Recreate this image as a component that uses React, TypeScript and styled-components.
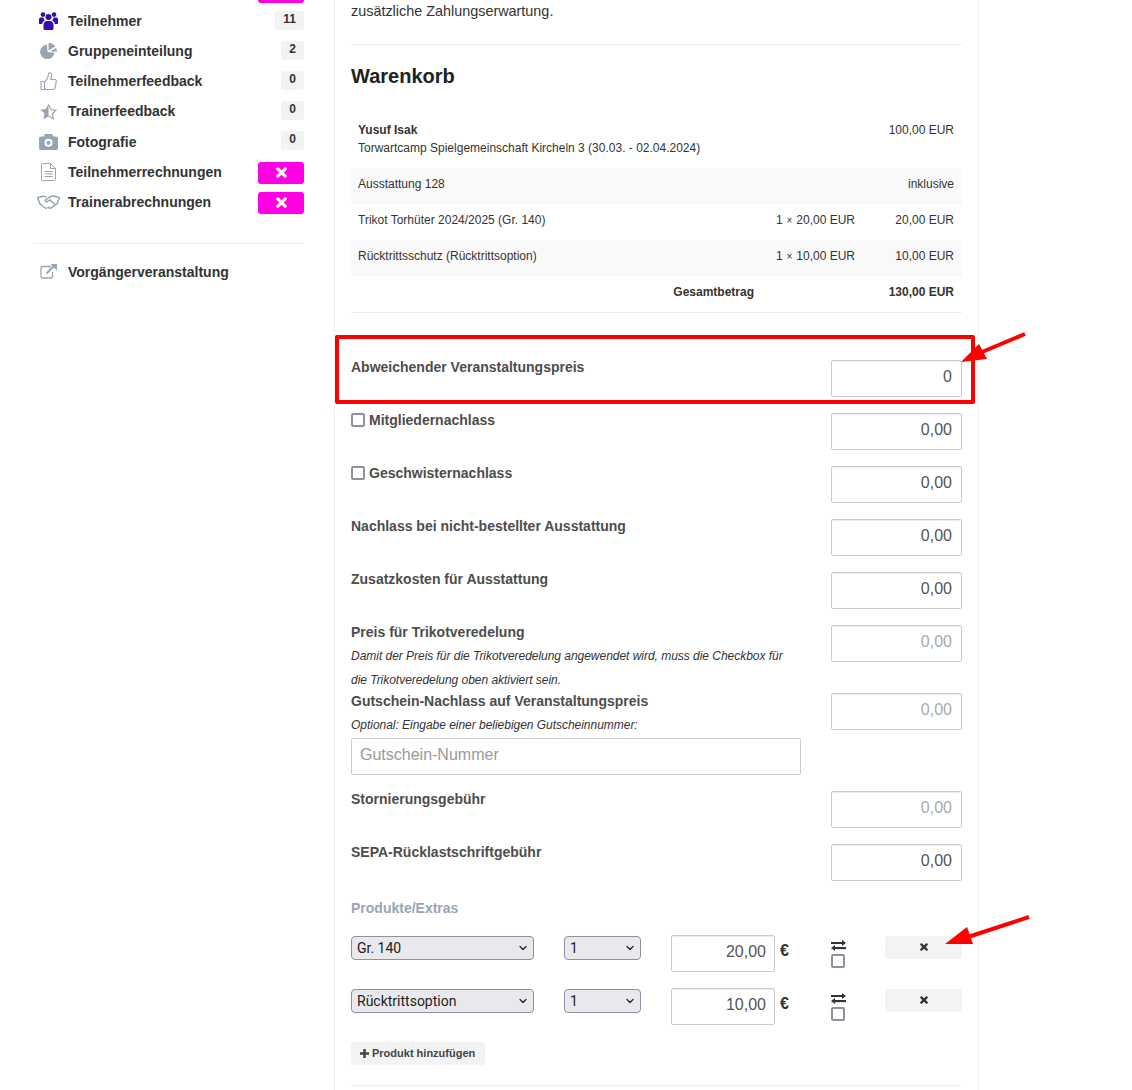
import React from 'react';
import styled, { createGlobalStyle } from 'styled-components';
import { ChevronDown } from 'lucide-react';

const GlobalStyle = createGlobalStyle`
  html, body {
    margin: 0;
    padding: 0;
    height: 1090px;
    overflow: hidden;
    background: #fff;
    font-family: 'Liberation Sans', sans-serif;
    color: #333;
  }
  * { box-sizing: border-box; }
`;

const UsersIcon = () => (
  <svg width="19" height="18" viewBox="0 0 19 18" fill="currentColor">
    <circle cx="4" cy="2.6" r="2.3" />
    <circle cx="15" cy="2.6" r="2.3" />
    <circle cx="9.5" cy="5" r="3" />
    <path d="M0 7.5c0-1.4 1-2 2-2h2.500c.2 1.400.7 2.300 1.500 3-1.500.6-2.600 1.800-2.800 3.500H1c-.6 0-1-.4-1-1z" />
    <path d="M19 7.500c0-1.400-1-2-2-2h-2.500c-.2 1.400-.7 2.300-1.500 3 1.500.6 2.600 1.800 2.800 3.500H18c.6 0 1-.4 1-1z" />
    <path d="M4.500 13c0-2.300 1.400-4 3.300-4h3.400c1.900 0 3.300 1.700 3.300 4v3.500c0 .9-.6 1.500-1.500 1.500H6c-.9 0-1.500-.6-1.500-1.500z" />
  </svg>
);

const PieIcon = () => (
  <svg width="17" height="16" viewBox="0 0 17 16" fill="currentColor">
    <path d="M7 1.500A7.300 7.300 0 1 0 14.600 9.800L7.500 9z" />
    <path d="M8.500 0A7.500 7.500 0 0 1 15.300 3.500L8.500 7.500z" />
    <path d="M16 5a7.600 7.600 0 0 1 1 3.700L10 8.200z" />
  </svg>
);

const ThumbIcon = () => (
  <svg width="17" height="19" viewBox="0 0 17 19" fill="none" stroke="currentColor" strokeWidth="1.100">
    <path d="M1 9.500h3.500v8H2c-.6 0-1-.4-1-1z" />
    <path d="M4.500 9.500c2-1 3.500-3.500 3.800-6.500 0-1.500.6-2.300 1.400-2.300 1.400 0 2 1.500 1.800 3l-.7 3.800h4.200c1 0 1.500.8 1.300 1.700l-1.200 6.600c-.2 1-.9 1.700-2 1.700H7c-1 0-1.700-.5-2.500-.8" />
  </svg>
);

const HalfStarIcon = () => (
  <svg width="17" height="17" viewBox="0 0 17 17">
    <path d="M8.500 .5 6 6 .3 6.700l4.200 3.900L3.400 16.300 8.500 13.500z" fill="currentColor" />
    <path d="M8.500 1.500 11 6.500l5 .7-3.700 3.500 1 5-4.800-2.700" fill="none" stroke="currentColor" strokeWidth="1.200" />
  </svg>
);

const CameraIcon = () => (
  <svg width="19" height="16" viewBox="0 0 19 16" fill="currentColor">
    <path fillRule="evenodd" d="M6 0h7l1.300 2.500H17c1.200 0 2 .8 2 2V14c0 1.200-.8 2-2 2H2c-1.200 0-2-.8-2-2V4.500c0-1.200.8-2 2-2h2.700zM9.500 4.800a4 4 0 1 0 0 8 4 4 0 0 0 0-8zm0 1.900a2.100 2.100 0 1 1 0 4.200 2.100 2.100 0 0 1 0-4.200z" />
  </svg>
);

const FileIcon = () => (
  <svg width="15" height="18" viewBox="0 0 15 18" fill="none" stroke="currentColor" strokeWidth="1">
    <path d="M.5 1.500c0-.6.4-1 1-1h8l5 5v11c0 .6-.4 1-1 1h-12c-.6 0-1-.4-1-1z" />
    <path d="M9.500.5v5h5M3.500 8.500h8M3.500 11h8M3.500 13.500h8" />
  </svg>
);

const HandshakeIcon = () => (
  <svg width="23" height="14" viewBox="0 0 23 14" fill="none" stroke="currentColor" strokeWidth="1.500">
    <path d="M.5 2.500 3 2l2-.5c1.500-.5 3 0 4.500.5M22.500 2.500 20 2l-2.500-.8c-1.500-.4-3-.2-5 1L8.500 5c-.8.8.3 2.200 1.500 1.700l3-1.700 5.300 4.800" />
    <path d="M.5 2.500 2.800 8.500l4 3.500c1 .9 2.200 1.500 3.200 1.200M22.500 2.500l-2.300 6-4.200 3c-1 1-2.500 2-3.500 1.500l-2-1" />
  </svg>
);

const ExternalIcon = () => (
  <svg width="17" height="15" viewBox="0 0 17 15" fill="none" stroke="currentColor">
    <path d="M11 2.500H3C1.800 2.500 1 3.300 1 4.500V12c0 1.200.8 2 2 2h7.500c1.200 0 2-.8 2-2V8" strokeWidth="1.300" />
    <path d="M6.500 9.500 14.500 1.500" strokeWidth="2" />
    <path d="M10.500 0H17v6.500z" fill="currentColor" stroke="none" />
  </svg>
);

const CrossIcon = ({ size }: { size: number }) => (
  <svg width={size} height={size} viewBox="0 0 12 12">
    <path d="M2 2l8 8M10 2l-8 8" stroke="currentColor" strokeWidth="3.400" strokeLinecap="round" fill="none" />
  </svg>
);

const PlusIcon = () => (
  <svg width="9" height="9" viewBox="0 0 9 9">
    <path d="M4.500 0v9M0 4.500h9" stroke="currentColor" strokeWidth="2.500" fill="none" />
  </svg>
);

const SwapIcon = () => (
  <svg width="15" height="11" viewBox="0 0 15 11" fill="currentColor">
    <path d="M0 1.900h11V0l4 3-4 3V4.100H0zM15 6.900H4V5L0 8l4 3V9.100h11z" />
  </svg>
);

type NavItem = {
  label: string;
  icon: React.ReactNode;
  badge?: string;
  alert?: boolean;
  active?: boolean;
};

const navItems: NavItem[] = [
  { label: 'Teilnehmer', icon: <UsersIcon />, badge: '11', active: true },
  { label: 'Gruppeneinteilung', icon: <PieIcon />, badge: '2' },
  { label: 'Teilnehmerfeedback', icon: <ThumbIcon />, badge: '0' },
  { label: 'Trainerfeedback', icon: <HalfStarIcon />, badge: '0' },
  { label: 'Fotografie', icon: <CameraIcon />, badge: '0' },
  { label: 'Teilnehmerrechnungen', icon: <FileIcon />, alert: true },
  { label: 'Trainerabrechnungen', icon: <HandshakeIcon />, alert: true },
];

const priceRows = [
  { label: 'Mitgliedernachlass', check: true, value: '0,00' },
  { label: 'Geschwisternachlass', check: true, value: '0,00' },
  { label: 'Nachlass bei nicht-bestellter Ausstattung', value: '0,00' },
  { label: 'Zusatzkosten für Ausstattung', value: '0,00' },
];

const products = [
  { name: 'Gr. 140', price: '20,00' },
  { name: 'Rücktrittsoption', price: '10,00' },
];

export default function App(): JSX.Element {
  return (
    <Page>
      <GlobalStyle />
      <Sidebar>
        <ClippedRow>
          <AlertButton><CrossIcon size={11} /></AlertButton>
        </ClippedRow>
        {navItems.map((item) => (
          <NavRow key={item.label}>
            <NavIcon $active={item.active}>{item.icon}</NavIcon>
            <NavLabel>{item.label}</NavLabel>
            {item.badge ? <Badge>{item.badge}</Badge> : null}
            {item.alert ? <AlertButton><CrossIcon size={11} /></AlertButton> : null}
          </NavRow>
        ))}
        <SideDivider />
        <NavRow>
          <NavIcon><ExternalIcon /></NavIcon>
          <NavLabel>Vorgängerveranstaltung</NavLabel>
        </NavRow>
      </Sidebar>

      <Main>
        <Intro>zusätzliche Zahlungserwartung.</Intro>
        <Divider />
        <Heading>Warenkorb</Heading>
        <CartTable>
          <colgroup>
            <col style={{ width: 411 }} />
            <col style={{ width: 101 }} />
            <col style={{ width: 99 }} />
          </colgroup>
          <tbody>
            <TallRow>
              <td colSpan={2}>
                <strong>Yusuf Isak</strong>
                <br />
                Torwartcamp Spielgemeinschaft Kircheln 3 (30.03. - 02.04.2024)
              </td>
              <AmountCell>100,00 EUR</AmountCell>
            </TallRow>
            <CartRow $striped>
              <td colSpan={2}>Ausstattung 128</td>
              <AmountCell>inklusive</AmountCell>
            </CartRow>
            <CartRow>
              <td>Trikot Torhüter 2024/2025 (Gr. 140)</td>
              <QtyCell>1 <small>×</small> 20,00 EUR</QtyCell>
              <AmountCell>20,00 EUR</AmountCell>
            </CartRow>
            <CartRow $striped>
              <td>Rücktrittsschutz (Rücktrittsoption)</td>
              <QtyCell>1 <small>×</small> 10,00 EUR</QtyCell>
              <AmountCell>10,00 EUR</AmountCell>
            </CartRow>
            <TotalRow>
              <TotalLabel>Gesamtbetrag</TotalLabel>
              <td />
              <AmountCell>130,00 EUR</AmountCell>
            </TotalRow>
          </tbody>
        </CartTable>

        <PriceForm>
          <PriceRow>
            <LabelColumn><FieldLabel>Abweichender Veranstaltungspreis</FieldLabel></LabelColumn>
            <PriceInput defaultValue="0" />
          </PriceRow>
          {priceRows.map((row) => (
            <PriceRow key={row.label}>
              <LabelColumn>
                <FieldLabel>
                  {row.check ? <CheckBox type="checkbox" /> : null}
                  {row.label}
                </FieldLabel>
              </LabelColumn>
              <PriceInput defaultValue={row.value} />
            </PriceRow>
          ))}
          <PriceRow>
            <LabelColumn>
              <FieldLabel>Preis für Trikotveredelung</FieldLabel>
              <Note>
                Damit der Preis für die Trikotveredelung angewendet wird, muss die Checkbox für die
                Trikotveredelung oben aktiviert sein.
              </Note>
            </LabelColumn>
            <PriceInput defaultValue="0,00" disabled />
          </PriceRow>
          <PriceRow>
            <OffsetColumn>
              <FieldLabel>Gutschein-Nachlass auf Veranstaltungspreis</FieldLabel>
              <Note>Optional: Eingabe einer beliebigen Gutscheinnummer:</Note>
              <VoucherInput placeholder="Gutschein-Nummer" />
            </OffsetColumn>
            <PriceInput defaultValue="0,00" disabled />
          </PriceRow>
          <PriceRow>
            <OffsetColumn><FieldLabel>Stornierungsgebühr</FieldLabel></OffsetColumn>
            <PriceInput defaultValue="0,00" disabled />
          </PriceRow>
          <PriceRow>
            <OffsetColumn><FieldLabel>SEPA-Rücklastschriftgebühr</FieldLabel></OffsetColumn>
            <PriceInput defaultValue="0,00" />
          </PriceRow>
        </PriceForm>

        <SectionLabel>Produkte/Extras</SectionLabel>
        {products.map((product) => (
          <ProductRow key={product.name}>
            <SelectWrap>
              <NativeSelect defaultValue={product.name}>
                <option>{product.name}</option>
              </NativeSelect>
              <ChevronDown size={12} strokeWidth={2.5} />
            </SelectWrap>
            <SelectWrap>
              <NativeSelect defaultValue="1">
                <option>1</option>
              </NativeSelect>
              <ChevronDown size={12} strokeWidth={2.5} />
            </SelectWrap>
            <PriceCell>
              <ProductPrice defaultValue={product.price} />
              <Euro>€</Euro>
            </PriceCell>
            <SwapCell>
              <SwapHint><SwapIcon /></SwapHint>
              <SwapCheck type="checkbox" />
            </SwapCell>
            <RemoveButton><CrossIcon size={8} /></RemoveButton>
          </ProductRow>
        ))}
        <AddButton><PlusIcon /> Produkt hinzufügen</AddButton>
        <Divider />
      </Main>

      <RedFrame />
      <ArrowOne width="70" height="34" viewBox="0 0 70 34">
        <path d="M67 4 L24 22" stroke="#f00" strokeWidth="4" fill="none" />
        <path d="M3 32 L21 14 L29 29 Z" fill="#f00" />
      </ArrowOne>
      <ArrowTwo width="90" height="34" viewBox="0 0 90 34">
        <path d="M87 3 L26 23" stroke="#f00" strokeWidth="4" fill="none" />
        <path d="M3 30 L25 13 L31 30 Z" fill="#f00" />
      </ArrowTwo>
    </Page>
  );
}

const Page = styled.div`
  position: relative;
  display: flex;
  align-items: flex-start;
  height: 1090px;
  padding-left: 33px;
  overflow: hidden;
`;

const Sidebar = styled.nav`
  width: 271px;
  margin-top: -24px;
  margin-right: 30px;
  flex: none;
`;

const NavRow = styled.div`
  display: flex;
  align-items: center;
  height: 30.1px;
`;

const ClippedRow = styled(NavRow)`
  justify-content: flex-end;
  align-items: flex-end;
  padding-bottom: 3px;
`;

const NavIcon = styled.span<{ $active?: boolean }>`
  display: flex;
  justify-content: center;
  width: 30px;
  margin-right: 5px;
  color: ${(p) => (p.$active ? '#3a0ca3' : '#98a4b3')};
`;

const NavLabel = styled.span`
  flex: 1;
  font-size: 14px;
  font-weight: 700;
  color: #333;
`;

const Badge = styled.span`
  align-self: flex-start;
  margin-top: 5px;
  padding: 2px 8px 5px;
  border-radius: 3px;
  background: #f3f3f3;
  font-size: 12px;
  font-weight: 700;
  line-height: 12px;
`;

const AlertButton = styled.span`
  display: flex;
  align-items: center;
  justify-content: center;
  width: 46px;
  height: 22px;
  margin-top: 2px;
  border-radius: 3px;
  background: #ff00e5;
  color: #fff;
`;

const SideDivider = styled.div`
  margin: 26px 0 13px;
  border-top: 1px solid #eee;
`;

const Main = styled.main`
  width: 645px;
  padding: 0 16px;
  border-left: 1px solid #f0f0f0;
  border-right: 1px solid #f0f0f0;
  flex: none;
  min-height: 1090px;
`;

const Intro = styled.p`
  margin: 0 0 22px;
  padding-top: 1px;
  font-size: 14.4px;
  line-height: 21px;
  color: #333;
`;

const Divider = styled.div`
  border-top: 1px solid #eee;
`;

const Heading = styled.h3`
  margin: 19px 0 24px;
  font-size: 20px;
  line-height: 24px;
  font-weight: 700;
  color: #222;
`;

const CartTable = styled.table`
  width: 100%;
  table-layout: fixed;
  border-collapse: collapse;
  border-bottom: 1px solid #eee;
  font-size: 12px;
  color: #333;

  td {
    padding: 0 8px 5px;
  }
  td:first-child {
    padding-left: 7px;
  }
  small {
    padding: 0 0.5px;
    font-size: 10px;
  }
`;

const CartRow = styled.tr<{ $striped?: boolean }>`
  height: 36px;
  background: ${(p) => (p.$striped ? '#f9f9f9' : 'transparent')};
`;

const TallRow = styled.tr`
  height: 56px;
  line-height: 18px;
  vertical-align: top;

  td {
    padding-top: 9px;
  }
`;

const TotalRow = styled(CartRow)`
  font-weight: 700;

  td {
    padding-bottom: 3px;
  }
`;

const TotalLabel = styled.td`
  text-align: right;
`;

const QtyCell = styled.td`
  text-align: right;
`;

const AmountCell = styled.td`
  text-align: right;
`;

const PriceForm = styled.div`
  margin-top: 47px;
`;

const PriceRow = styled.div`
  display: grid;
  grid-template-columns: 450px 131px;
  column-gap: 30px;
  align-items: start;
`;

const LabelColumn = styled.div``;

const OffsetColumn = styled(LabelColumn)`
  padding-top: 1px;
`;

const FieldLabel = styled.div`
  display: flex;
  align-items: center;
  height: 14px;
  margin-bottom: 5px;
  font-size: 14px;
  font-weight: 700;
  line-height: 14px;
  color: #4d4d4d;
`;

const Note = styled.div`
  margin-bottom: 1px;
  font-size: 12px;
  font-style: italic;
  letter-spacing: -0.03px;
  line-height: 24px;
  color: #333;
`;

const PriceInput = styled.input`
  width: 131px;
  height: 37px;
  margin-bottom: 16px;
  padding: 0 9px 2px;
  border: 1px solid #ccc;
  border-radius: 2px;
  background: #fff;
  font-family: 'Liberation Sans', sans-serif;
  font-size: 16px;
  color: #555;
  text-align: right;
  box-shadow: inset 0 1px 1px rgba(0, 0, 0, 0.075);

  &:disabled {
    color: #aaa;
  }
`;

const VoucherInput = styled.input`
  display: block;
  width: 450px;
  height: 37px;
  margin-bottom: 16px;
  padding: 0 8px 2px;
  border: 1px solid #ccc;
  border-radius: 2px;
  font-family: 'Liberation Sans', sans-serif;
  font-size: 16px;

  &::placeholder {
    color: #999;
  }
`;

const CheckBox = styled.input`
  appearance: none;
  flex: none;
  width: 14px;
  height: 14px;
  margin: 0 4px 0 0;
  border: 2px solid #8f8f9d;
  border-radius: 2px;
  background: #fff;
`;

const SectionLabel = styled.div`
  margin: 4px 0 20px;
  font-size: 14px;
  font-weight: 700;
  line-height: 14px;
  color: #9aa5b1;
`;

const ProductRow = styled.div`
  display: grid;
  grid-template-columns: 183px 77px 130px 24px 77px;
  column-gap: 30px;
  align-items: start;
  height: 53px;
`;

const SelectWrap = styled.div`
  position: relative;
  margin-top: 1px;

  svg {
    position: absolute;
    top: 6px;
    right: 5px;
    color: #222;
    pointer-events: none;
  }
`;

const NativeSelect = styled.select`
  appearance: none;
  display: block;
  width: 100%;
  height: 24px;
  padding: 0 5px;
  border: 1px solid #8f8f9d;
  border-radius: 4px;
  background: #e9e9ed;
  font-family: Roboto, sans-serif;
  font-size: 14px;
  color: #222;
`;

const PriceCell = styled.div`
  display: flex;
  align-items: center;
`;

const ProductPrice = styled(PriceInput)`
  width: 104px;
  margin-bottom: 0;
  padding-right: 8px;
`;

const Euro = styled.span`
  margin: 0 0 4px 5px;
  font-size: 16px;
  font-weight: 700;
`;

const SwapCell = styled.div`
  display: flex;
  flex-direction: column;
  align-items: flex-start;
  gap: 4px;
  padding-top: 2px;
  color: #333;
`;

const SwapHint = styled.span`
  display: block;
  height: 13px;
  border-bottom: 1px dotted #ccc;
`;

const SwapCheck = styled(CheckBox)`
  margin: 0;
`;

const RemoveButton = styled.span`
  display: flex;
  align-items: center;
  justify-content: center;
  height: 23px;
  margin-top: 1px;
  border-radius: 3px;
  background: #f3f3f3;
  color: #333;
`;

const AddButton = styled.span`
  display: inline-flex;
  align-items: center;
  gap: 3px;
  height: 23px;
  margin: 1px 0 20px;
  padding: 0 10px 0 9px;
  border-radius: 3px;
  background: #f3f3f3;
  font-size: 11px;
  font-weight: 700;
  color: #444;
`;

const RedFrame = styled.div`
  position: absolute;
  left: 335px;
  top: 335px;
  width: 640px;
  height: 69px;
  border: 4px solid #f00;
  border-radius: 2px;
  pointer-events: none;
`;

const ArrowOne = styled.svg`
  position: absolute;
  left: 958px;
  top: 330px;
`;

const ArrowTwo = styled.svg`
  position: absolute;
  left: 942px;
  top: 914px;
`;
